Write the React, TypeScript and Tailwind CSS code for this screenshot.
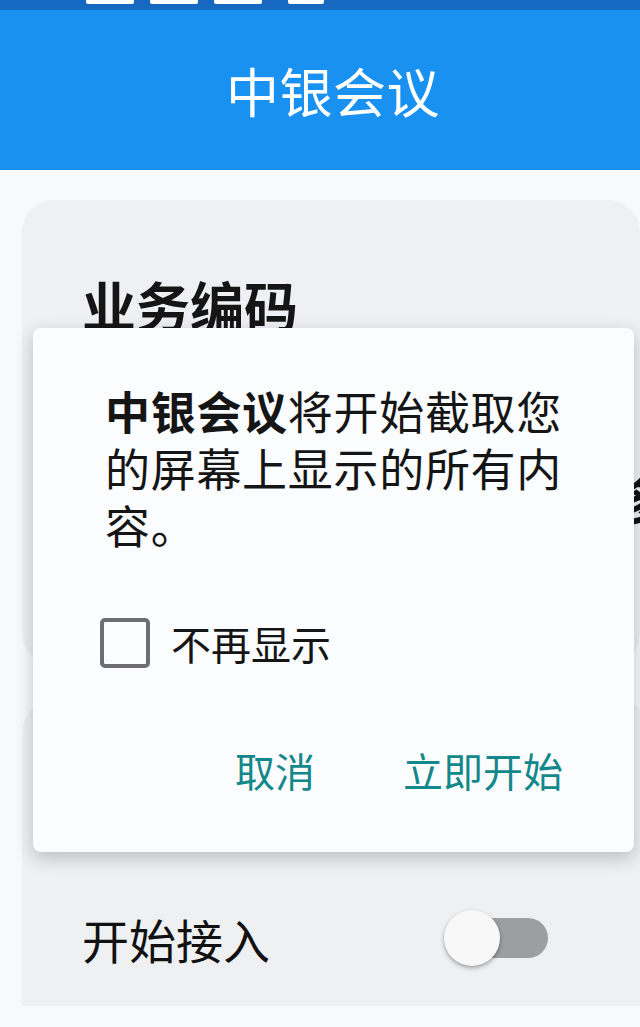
import React from "react";

const font = { fontFamily: '"Noto Sans CJK SC", "Noto Sans", sans-serif' };

export default function App() {
  return (
    <div
      className="relative w-[640px] h-[1027px] overflow-hidden bg-[#f7f9fb]"
      style={font}
    >
      {/* status bar */}
      <div className="h-[10px] bg-[#1668c0] relative">
        <div className="flex gap-[16px] pl-[86px]">
          <div className="w-[48px] h-[4px] bg-white rounded-b-[2px]" />
          <div className="w-[48px] h-[4px] bg-white rounded-b-[2px]" />
          <div className="w-[48px] h-[4px] bg-white rounded-b-[2px]" />
          <div className="w-[36px] h-[4px] bg-white rounded-b-[2px] ml-[10px]" />
        </div>
      </div>
      {/* header */}
      <div className="h-[160px] bg-[#1991f0] flex items-center justify-center pl-[26px]">
        <span className="text-white text-[53px] leading-none tracking-[0.5px]">中银会议</span>
      </div>

      {/* content */}
      <div className="pt-[30px] pl-[22px] flex flex-col gap-[36px]">
        <div className="relative h-[465px] w-[618px] rounded-[32px] bg-[#eff0f3] pl-[60px] pt-[74px]">
          <div className="text-[54px] font-bold text-[#151515] leading-[62px]">业务编码</div>
          <div className="absolute right-[-28px] top-[262px] text-[50px] font-bold text-[#111]">多</div>
        </div>
        <div className="h-[305px] w-[630px] rounded-t-[32px] bg-[#eff0f2] flex items-end pb-[40px] pl-[60px]">
          <div className="flex items-center w-full">
            <span className="text-[47px] text-[#111] leading-none">开始接入</span>
            <div className="relative ml-[174px] w-[104px] h-[56px] flex items-center">
              <div className="absolute left-[26px] w-[78px] h-[40px] rounded-full bg-[#9d9ea1]" />
              <div className="absolute left-0 w-[56px] h-[56px] rounded-full bg-[#f8f8f8] shadow-[0_2px_4px_rgba(0,0,0,0.35)]" />
            </div>
          </div>
        </div>
      </div>

      {/* dialog */}
      <div className="absolute left-[33px] top-[328px] w-[601px] h-[524px] bg-[#fbfcfe] rounded-[8px] shadow-[0_6px_18px_rgba(0,0,0,0.22)] flex flex-col">
        <p className="pt-[54px] pl-[72px] pr-[50px] text-[45px] leading-[57px] tracking-[0.7px] text-[#151515]">
          <b className="font-bold">中银会议</b>将开始截取您的屏幕上显示的所有内容。
        </p>
        <div className="mt-[65px] ml-[67px] flex items-center gap-[21px]">
          <div className="w-[50px] h-[50px] rounded-[5px] border-[4px] border-[#6e6e70]" />
          <span className="text-[40px] leading-none text-[#151515]">不再显示</span>
        </div>
        <div className="mt-[77px] flex justify-end gap-[88px] pr-[71px] text-[40px] leading-[50px] text-[#13888a]">
          <span>取消</span>
          <span>立即开始</span>
        </div>
      </div>
    </div>
  );
}
